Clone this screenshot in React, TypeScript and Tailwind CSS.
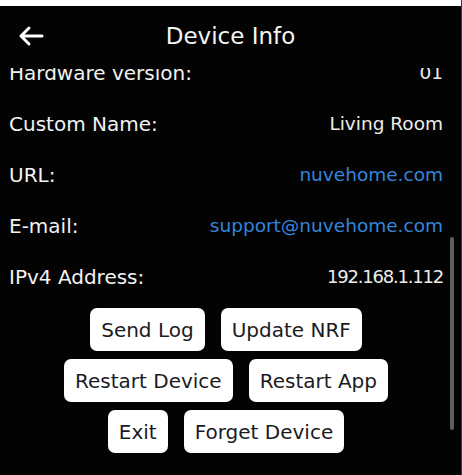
const rows = [
  { label: 'Hardware version:', value: '01' },
  { label: 'Custom Name:', value: 'Living Room' },
  { label: 'URL:', value: 'nuvehome.com', link: true },
  { label: 'E-mail:', value: 'support@nuvehome.com', link: true },
  { label: 'IPv4 Address:', value: '192.168.1.112', digits: true },
]

const buttonRows = [
  ['Send Log', 'Update NRF'],
  ['Restart Device', 'Restart App'],
  ['Exit', 'Forget Device'],
]

const BackArrow = () => (
  <svg width="26" height="22" viewBox="0 0 26 22" fill="none">
    <path
      d="M3 11H24M3 11L11 3M3 11L11 19"
      stroke="white"
      strokeWidth="3"
      strokeLinecap="round"
      strokeLinejoin="round"
    />
  </svg>
)

export default function App() {
  return (
    <div
      className="w-[462px] h-[475px] bg-[#030303] flex flex-col overflow-hidden text-white border-r border-[#3a3a3a]"
      style={{ fontFamily: '"DejaVu Sans", sans-serif' }}
    >
      <div className="h-[6px] bg-white shrink-0" />

      {/* header */}
      <div className="h-[62px] shrink-0 grid grid-cols-[1fr_auto_1fr] items-center pb-[2px]">
        <div className="pl-[18px] flex items-center">
          <BackArrow />
        </div>
        <div className="text-[23px] text-[#f4f4f4]">Device Info</div>
        <div />
      </div>

      {/* scrolling body */}
      <div className="flex-1 relative overflow-hidden">
        <div className="w-[452px] -mt-[21px]">
          {rows.map((r) => (
            <div key={r.label} className="h-[51px] px-[9px] flex items-center justify-between">
              <span className="text-[#f2f2f2] text-[20px]">{r.label}</span>
              <span
                className={
                  r.link
                    ? 'text-[#3485dc] text-[18.5px]'
                    : r.digits
                      ? 'text-[#ececec] text-[18px] tracking-[-1.2px]'
                      : 'text-[#ececec] text-[18.5px]'
                }
              >
                {r.value}
              </span>
            </div>
          ))}

          <div className="mt-[6px] flex flex-col items-center gap-[8px]">
            {buttonRows.map((br, i) => (
              <div key={i} className="flex gap-[16px]">
                {br.map((b) => (
                  <button
                    key={b}
                    className="h-[43px] px-[11px] bg-white rounded-[7px] text-[#1b1b1f] text-[20px]"
                  >
                    {b}
                  </button>
                ))}
              </div>
            ))}
          </div>

          <div className="mt-[20px] px-[95px] flex items-center gap-[8px] text-[13px] text-[#777]">
            <div className="w-[13px] h-[10px] bg-[#555] rounded-sm" />
            <span>Information sent to support</span>
          </div>
        </div>

        {/* scrollbar thumb */}
        <div className="absolute right-[7px] top-[169px] w-[4px] h-[193px] rounded-full bg-[#5e5e5e]" />
      </div>
    </div>
  )
}
